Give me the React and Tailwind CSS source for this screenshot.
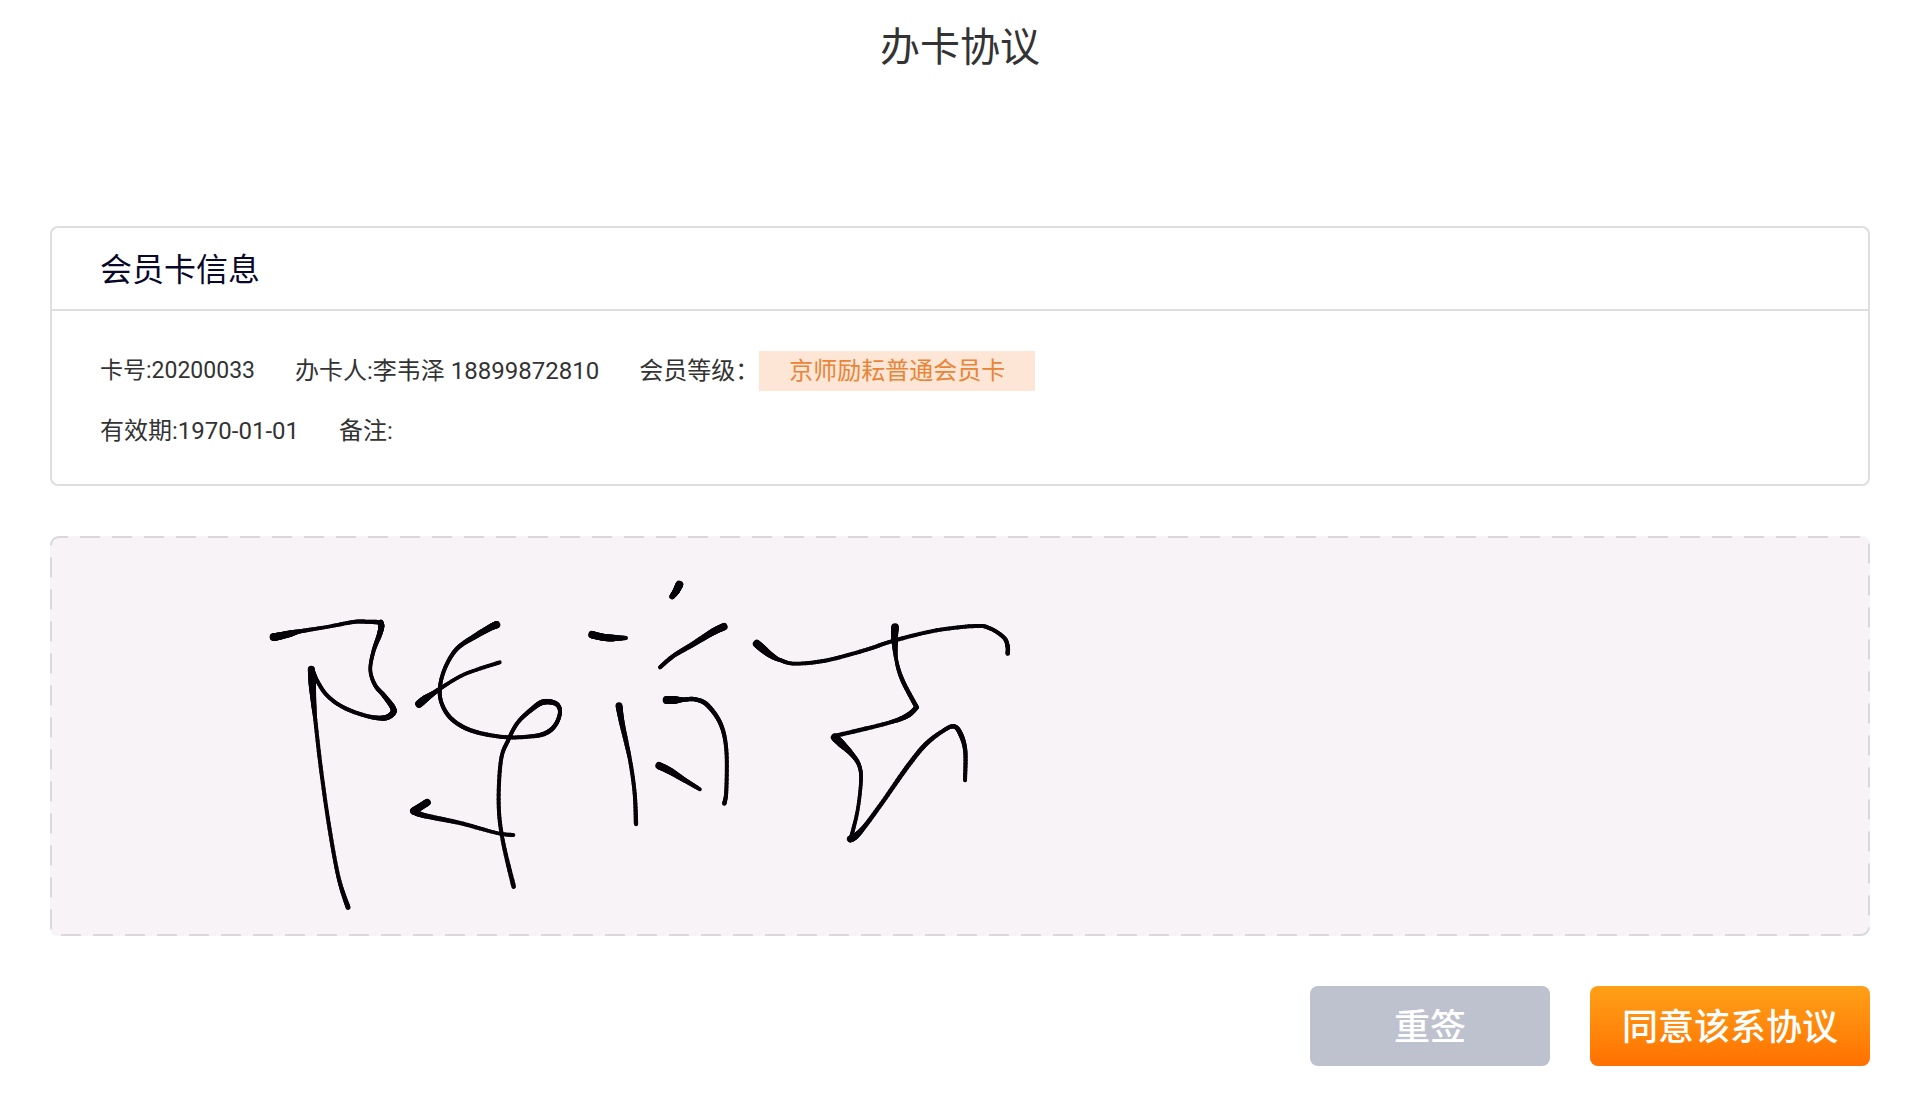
import { useState } from 'react'

const card = {
  number: '20200033',
  holder: '李韦泽 18899872810',
  level: '京师励耘普通会员卡',
  expires: '1970-01-01',
  remark: '',
}

// Pen strokes: every point is [x, y, pen width], one group per character
const signature = [
  {
    origin: 'translate(600 102)',
    strokes: [
      [[70, 201, 22], [85, 199, 23], [120, 191, 20], [150, 184, 13], [230, 171, 11], [310, 156, 12], [350, 155, 12], [392, 157, 14]],
      [[392, 157, 16], [394, 170, 18], [388, 195, 16], [370, 245, 12], [361, 300, 11], [375, 345, 12], [402, 377, 14], [428, 412, 17], [428, 430, 18], [402, 444, 16], [350, 438, 12], [280, 412, 12], [230, 375, 12], [200, 330, 12], [184, 298, 18]],
      [[184, 298, 21], [187, 345, 22], [191, 400, 16], [196, 450, 12], [212, 590, 12], [236, 760, 12], [265, 920, 12], [294, 1012, 15]],
      [[740, 164, 22], [722, 172, 20], [680, 196, 17], [622, 235, 13], [587, 290, 12], [570, 350, 12], [575, 400, 12], [605, 447, 13], [665, 482, 13], [760, 501, 12], [845, 499, 12], [890, 488, 14], [918, 462, 13], [930, 425, 12], [918, 401, 14], [880, 396, 17], [845, 418, 14], [803, 458, 12], [775, 510, 12], [753, 570, 12], [746, 700, 12], [758, 810, 12], [791, 950, 14]],
      [[507, 402, 23], [525, 387, 22], [550, 370, 15], [590, 343, 11], [650, 310, 11], [749, 277, 12]],
      [[532, 697, 21], [515, 708, 21], [491, 723, 22]],
      [[491, 723, 21], [520, 736, 16], [630, 759, 13], [740, 789, 11], [790, 795, 12]],
    ],
  },
  {
    origin: 'translate(1560 102)',
    strokes: [
      [[328, 44, 24], [318, 64, 21], [306, 80, 16]],
      [[66, 194, 23], [95, 201, 21], [125, 204, 21], [168, 204, 12]],
      [[462, 170, 22], [430, 185, 21], [370, 222, 16], [310, 258, 13], [270, 292, 12]],
      [[147, 407, 21], [156, 460, 17], [180, 570, 12], [194, 670, 12], [198, 762, 13]],
      [[290, 390, 24], [312, 390, 24], [340, 389, 13], [375, 388, 13], [412, 405, 14], [452, 462, 13], [469, 540, 12], [469, 660, 12], [463, 701, 13]],
      [[267, 587, 22], [300, 603, 21], [345, 631, 15], [390, 658, 11]],
    ],
  },
  {
    origin: 'translate(2070 192)',
    strokes: [
      [[50, 131, 23], [70, 148, 23], [93, 166, 18], [120, 180, 12], [165, 191, 11], [255, 182, 12], [370, 152, 12], [465, 121, 12], [590, 91, 12], [705, 78, 12], [750, 85, 12], [792, 113, 12], [803, 140, 13], [803, 161, 13]],
      [[465, 81, 23], [464, 120, 20], [469, 180, 11], [487, 240, 13], [530, 322, 14]],
      [[530, 322, 14], [500, 348, 16], [440, 370, 12], [284, 408, 13]],
      [[284, 412, 23], [305, 432, 23], [335, 462, 15], [357, 495, 12], [363, 540, 11], [353, 630, 11], [334, 710, 12]],
      [[331, 717, 21], [347, 708, 19], [375, 678, 14], [430, 603, 13], [500, 503, 14], [555, 435, 14], [607, 394, 12], [642, 379, 13], [663, 405, 15], [676, 455, 13], [675, 541, 12]],
    ],
  },
]

const STEPS = 10

const spline = (a, b, c, d, t) =>
  0.5 * (2 * b + (c - a) * t + (2 * a - 5 * b + 4 * c - d) * t * t + (3 * b - a - 3 * c + d) * t * t * t)

function smooth(points) {
  const out = [points[0]]
  for (let i = 0; i < points.length - 1; i++) {
    const a = points[i - 1] || points[i]
    const b = points[i]
    const c = points[i + 1]
    const d = points[i + 2] || c
    for (let s = 1; s <= STEPS; s++) {
      const t = s / STEPS
      out.push([spline(a[0], b[0], c[0], d[0], t), spline(a[1], b[1], c[1], d[1], t), b[2] + (c[2] - b[2]) * t])
    }
  }
  return out
}

function Stroke({ points }) {
  const dots = smooth(points)
  return dots.slice(1).map((p, i) => (
    <line key={i} x1={dots[i][0]} y1={dots[i][1]} x2={p[0]} y2={p[1]} strokeWidth={p[2]} />
  ))
}

function SignaturePad({ signed }) {
  return (
    <div className="relative h-[400px] overflow-hidden rounded-lg bg-[#f7f3f7]">
      {/* Dashed outline */}
      <svg className="absolute inset-px h-[calc(100%-2px)] w-[calc(100%-2px)] overflow-visible" aria-hidden="true">
        <rect
          width="100%"
          height="100%"
          rx="8"
          fill="none"
          stroke="#dbd8dc"
          strokeWidth="2"
          strokeDasharray="20 12"
          strokeDashoffset="11"
        />
      </svg>
      {signed && (
        <svg
          viewBox="0 0 3000 1200"
          className="absolute top-0 left-0 h-[400px] w-[1000px]"
          stroke="#050308"
          strokeLinecap="round"
          role="img"
          aria-label="签名"
        >
          {signature.map((char) => (
            <g key={char.origin} transform={char.origin}>
              {char.strokes.map((points, i) => (
                <Stroke key={i} points={points} />
              ))}
            </g>
          ))}
        </svg>
      )}
    </div>
  )
}

export default function App() {
  const [signed, setSigned] = useState(true)

  return (
    <div className="bg-white font-[Roboto,'Noto_Sans_CJK_SC',sans-serif] text-[#333333]" lang="zh-CN">
      <h1 className="pt-[18px] text-center text-[40px] leading-[60px]">办卡协议</h1>

      <main className="mt-[148px] px-[50px] pb-[50px]">
        {/* Card info */}
        <section className="rounded-lg border-2 border-[#dedede]">
          <h2 className="border-b-2 border-[#dedede] px-12 pt-[18px] pb-[15px] text-[32px] leading-12 text-[#08082a]">
            会员卡信息
          </h2>
          <div className="flex flex-col gap-5 px-12 pt-10 pb-[33px] text-2xl leading-10">
            <div className="flex flex-wrap gap-x-10">
              <span className="text-[23px]">卡号:{card.number}</span>
              <span>办卡人:{card.holder}</span>
              <span className="flex">
                会员等级：
                <span className="bg-[#fde6d6] px-[30px] text-[#ea8437]">{card.level}</span>
              </span>
            </div>
            <div className="flex flex-wrap gap-x-10">
              <span>有效期:{card.expires}</span>
              <span>备注:{card.remark}</span>
            </div>
          </div>
        </section>

        {/* Signature */}
        <div className="mt-[50px]">
          <SignaturePad signed={signed} />
        </div>

        <div className="mt-[50px] flex justify-end gap-10 text-4xl font-medium text-white">
          <button type="button" onClick={() => setSigned(false)} className="h-20 w-60 rounded-lg bg-[#bec2cf] pt-1">
            重签
          </button>
          <button type="button" className="h-20 w-[280px] rounded-lg bg-linear-to-b from-[#ffa017] to-[#ff7000] pt-1">
            同意该系协议
          </button>
        </div>
      </main>
    </div>
  )
}
